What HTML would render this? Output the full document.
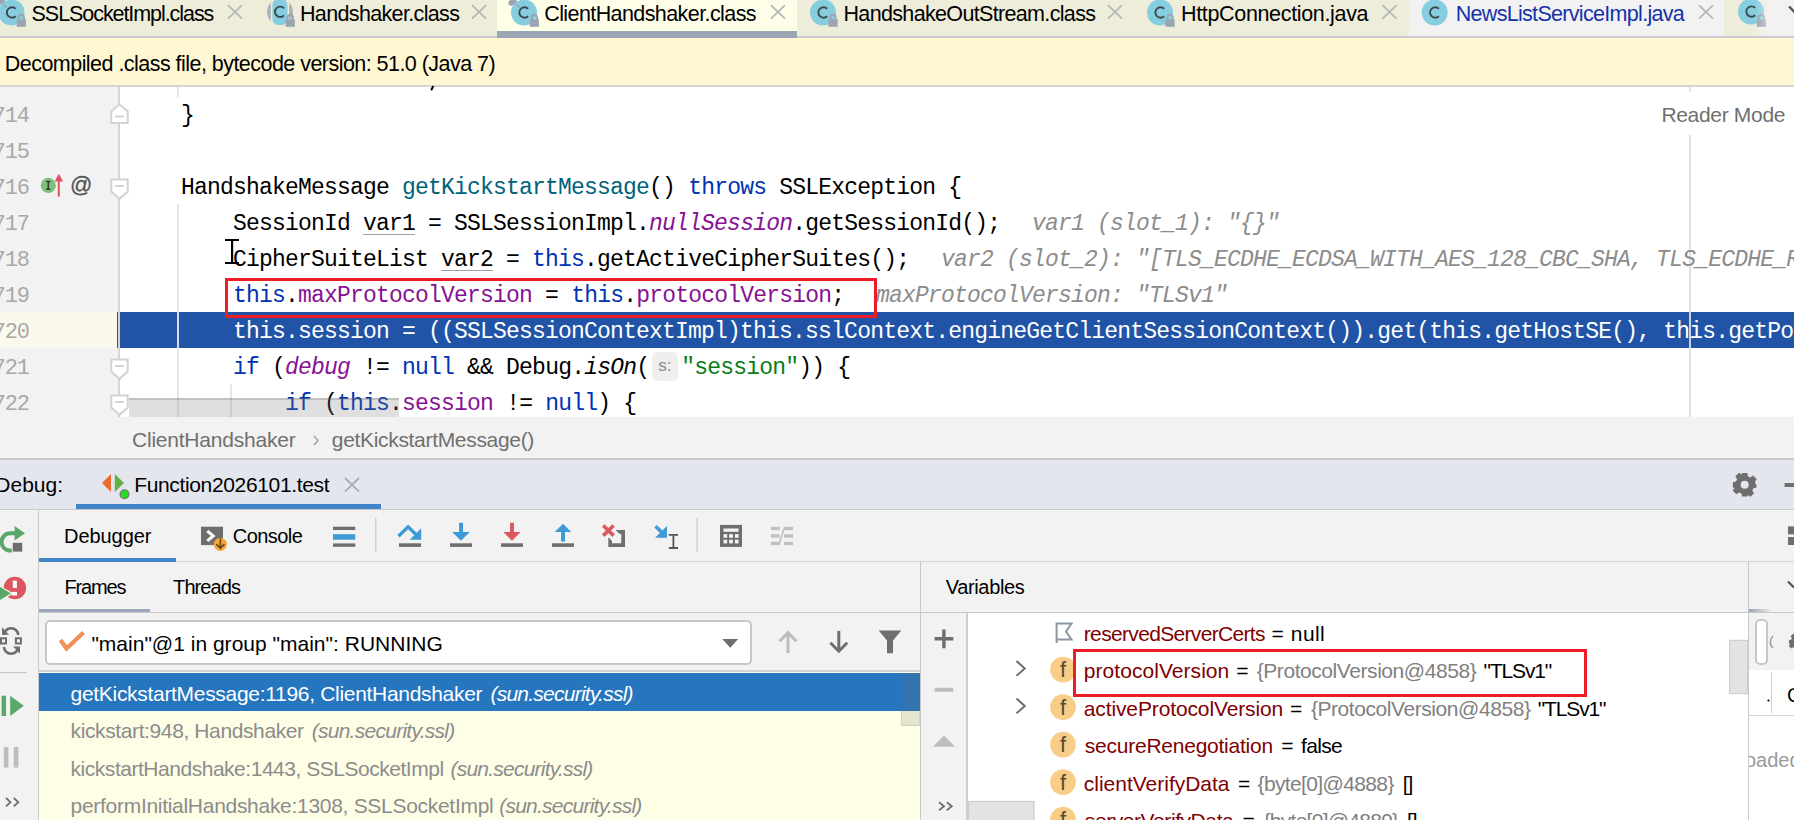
<!DOCTYPE html>
<html><head><meta charset="utf-8">
<style>
*{margin:0;padding:0;box-sizing:border-box}
html,body{width:1794px;height:820px;overflow:hidden;background:#f2f2f2}
body{position:relative;font-family:"Liberation Sans",sans-serif;font-size:20px;color:#000}
.a{position:absolute}
.s{position:absolute;overflow:visible}
.t{position:absolute;white-space:pre;line-height:30px}
.t i{font-style:italic}
.m{position:absolute;white-space:pre;font-family:"Liberation Mono",monospace;font-size:23px;letter-spacing:-0.8px;line-height:30px;color:#000}
.ln{position:absolute;white-space:pre;font-family:"Liberation Mono",monospace;font-size:22px;letter-spacing:-1.2px;line-height:30px;color:#a8a8a8;text-align:right;width:60px}
.kw{color:#0033b3}.fd{color:#871094}.md{color:#00627a}.st{color:#067d17}.it{font-style:italic}
.hint{color:#8c8c8c;font-style:italic}
.ul{text-decoration:underline;text-decoration-color:#a0a0a0;text-underline-offset:4px;text-decoration-thickness:1px}
</style></head>
<body>
<!-- ================= TAB BAR ================= -->
<div class="a" style="left:0;top:0;width:1794px;height:36px;background:#eeedd9"></div>
<div class="a" style="left:0;top:36px;width:1794px;height:2px;background:#cdcdd1"></div>
<div class="a" style="left:497px;top:0;width:300px;height:31px;background:#fefde8"></div>
<div class="a" style="left:497px;top:31px;width:300px;height:7px;background:#9ba7b7"></div>
<div class="a" style="left:1409px;top:0;width:315px;height:36px;background:#f2f2f2"></div>
<div class="a" style="left:1724px;top:0;width:70px;height:36px;background:linear-gradient(90deg,#eeedd9 0px,#eeedd9 30px,#f2f2f2 50px)"></div>

<svg class="s" style="left:0;top:0" width="1794" height="36" viewBox="0 0 1794 36">
 
 <!-- tab1 -->
 <g transform="translate(11.5 12.5)"><circle cx="0" cy="0" r="13" fill="#86cedf"/><path d="M4.2,-3.7 A5.2,5.2 0 1 0 4.2,3.7" fill="none" stroke="#3e474c" stroke-width="1.9"/></g><g transform="translate(21.3 19.3)"><rect x="-4.6" y="0" width="9.2" height="7.5" fill="#9aa5b1"/><path d="M-2.6,0.5 V-2 A2.6,2.6 0 0 1 2.6,-2 V0.5" fill="none" stroke="#9aa5b1" stroke-width="2"/></g>
 <ellipse cx="1" cy="1" rx="4.5" ry="3" transform="rotate(-35 1 1)" fill="#9aa5b1"/>
 <path d="M3.2,4.4 L6.6,7.5" stroke="#9aa5b1" stroke-width="1.6"/>
 <g transform="translate(228 5.2)"><path d="M0,0 L14,13.5 M14,0 L0,13.5" stroke="#b4b8b8" stroke-width="1.8"/></g>
 <!-- tab2 -->
 <circle cx="280" cy="12" r="13" fill="#a9b4bb"/>
 <rect x="270.9" y="-1" width="18.2" height="27" fill="#eeedd9"/>
 <rect x="272.4" y="-1" width="15.1" height="26" rx="6" fill="#86cedf"/>
 <path d="M284,8.3 A5.2,5.2 0 1 0 284,15.3" fill="none" stroke="#3e474c" stroke-width="1.9"/>
 <g transform="translate(290.2 19.3)"><rect x="-4.6" y="0" width="9.2" height="7.5" fill="#9aa5b1"/><path d="M-2.6,0.5 V-2 A2.6,2.6 0 0 1 2.6,-2 V0.5" fill="none" stroke="#9aa5b1" stroke-width="2"/></g>
 <g transform="translate(472 5.2)"><path d="M0,0 L14,13.5 M14,0 L0,13.5" stroke="#b4b8b8" stroke-width="1.8"/></g>
 <!-- tab3 -->
 <g transform="translate(524 12.5)"><circle cx="0" cy="0" r="13" fill="#86cedf"/><path d="M4.2,-3.7 A5.2,5.2 0 1 0 4.2,3.7" fill="none" stroke="#3e474c" stroke-width="1.9"/></g><g transform="translate(534.3 19.3)"><rect x="-4.6" y="0" width="9.2" height="7.5" fill="#9aa5b1"/><path d="M-2.6,0.5 V-2 A2.6,2.6 0 0 1 2.6,-2 V0.5" fill="none" stroke="#9aa5b1" stroke-width="2"/></g>
 <ellipse cx="512.5" cy="2" rx="4.5" ry="3" transform="rotate(-35 512.5 2)" fill="#9aa5b1"/>
 <path d="M516.2,4.4 L519.6,7.5" stroke="#9aa5b1" stroke-width="1.6"/>
 <g transform="translate(771 5.2)"><path d="M0,0 L14,13.5 M14,0 L0,13.5" stroke="#b4b8b8" stroke-width="1.8"/></g>
 <!-- tab4 -->
 <g transform="translate(823 12.5)"><circle cx="0" cy="0" r="13" fill="#86cedf"/><path d="M4.2,-3.7 A5.2,5.2 0 1 0 4.2,3.7" fill="none" stroke="#3e474c" stroke-width="1.9"/></g><g transform="translate(833 19.3)"><rect x="-4.6" y="0" width="9.2" height="7.5" fill="#9aa5b1"/><path d="M-2.6,0.5 V-2 A2.6,2.6 0 0 1 2.6,-2 V0.5" fill="none" stroke="#9aa5b1" stroke-width="2"/></g>
 <g transform="translate(1108 5.2)"><path d="M0,0 L14,13.5 M14,0 L0,13.5" stroke="#b4b8b8" stroke-width="1.8"/></g>
 <!-- tab5 -->
 <g transform="translate(1160 12.5)"><circle cx="0" cy="0" r="13" fill="#86cedf"/><path d="M4.2,-3.7 A5.2,5.2 0 1 0 4.2,3.7" fill="none" stroke="#3e474c" stroke-width="1.9"/></g><g transform="translate(1170 19.3)"><rect x="-4.6" y="0" width="9.2" height="7.5" fill="#9aa5b1"/><path d="M-2.6,0.5 V-2 A2.6,2.6 0 0 1 2.6,-2 V0.5" fill="none" stroke="#9aa5b1" stroke-width="2"/></g>
 <g transform="translate(1382.5 5.2)"><path d="M0,0 L14,13.5 M14,0 L0,13.5" stroke="#b4b8b8" stroke-width="1.8"/></g>
 <!-- tab6 -->
 <g transform="translate(1434.7 12.5)"><circle cx="0" cy="0" r="13" fill="#86cedf"/><path d="M4.2,-3.7 A5.2,5.2 0 1 0 4.2,3.7" fill="none" stroke="#3e474c" stroke-width="1.9"/></g>
 <g transform="translate(1699 5.2)"><path d="M0,0 L14,13.5 M14,0 L0,13.5" stroke="#b4b8b8" stroke-width="1.8"/></g>
 <!-- tab7 -->
 <g transform="translate(1751 11.6)"><circle cx="0" cy="0" r="13" fill="#86cedf"/><path d="M4.2,-3.7 A5.2,5.2 0 1 0 4.2,3.7" fill="none" stroke="#3e474c" stroke-width="1.9"/></g><g transform="translate(1761.3 19.3)"><rect x="-4.6" y="0" width="9.2" height="7.5" fill="#9aa5b1"/><path d="M-2.6,0.5 V-2 A2.6,2.6 0 0 1 2.6,-2 V0.5" fill="none" stroke="#9aa5b1" stroke-width="2"/></g>
 <path d="M1789,6.5 L1795,12.5" stroke="#555" stroke-width="2.4"/>
</svg>
<div class="a" style="left:1755px;top:0;width:20px;height:36px;background:linear-gradient(90deg,rgba(242,242,242,0),rgba(242,242,242,0.7))"></div>

<!-- ================= BANNER ================= -->
<div class="a" style="left:0;top:38px;width:1794px;height:47px;background:#fef7d1"></div>
<div class="a" style="left:0;top:85px;width:1794px;height:2px;background:#d4d4d4"></div>

<!-- ================= EDITOR ================= -->
<div class="a" style="left:0;top:87px;width:118px;height:330px;background:#f2f2f2"></div>
<div class="a" style="left:120px;top:87px;width:1674px;height:330px;background:#fff"></div>
<div class="a" style="left:0;top:312px;width:117px;height:36px;background:#fbf9ec"></div>
<div class="a" style="left:117px;top:312px;width:1677px;height:36px;background:#2154a6"></div>
<div class="a" style="left:118px;top:87px;width:2px;height:330px;background:#d5d5d5"></div>
<!-- indent guides & right margin -->
<div class="a" style="left:177px;top:87px;width:2px;height:10px;background:#e6e6e6"></div>
<div class="a" style="left:177px;top:204px;width:2px;height:213px;background:#e6e6e6"></div>
<div class="a" style="left:177px;top:312px;width:2px;height:36px;background:#d5dcea"></div>
<div class="a" style="left:230px;top:384px;width:2px;height:33px;background:#e6e6e6"></div>
<div class="a" style="left:1689px;top:87px;width:2px;height:330px;background:#e2e2e2"></div>
<div class="a" style="left:1640px;top:91.5px;width:154px;height:43.5px;background:#fff"></div>
<div class="a" style="left:1689px;top:312px;width:2px;height:36px;background:#c9d3e6"></div>
<!-- fold markers -->
<svg class="s" style="left:100px;top:87px" width="40" height="330" viewBox="100 87 40 330">
 <g fill="#fff" stroke="#d3d3d3" stroke-width="2">
  <path d="M111.3,123 V111.5 L119.5,104.3 L127.7,111.5 V123 Z"/>
  <path d="M111.3,179.5 H127.7 V191.5 L119.5,198.8 L111.3,191.5 Z"/>
  <path d="M111.3,359.5 H127.7 V371.5 L119.5,378.8 L111.3,371.5 Z"/>
  <path d="M111.3,395.5 H127.7 V407.5 L119.5,414.8 L111.3,407.5 Z"/>
 </g>
 <g stroke="#d3d3d3" stroke-width="2">
  <path d="M115,116.5 H124 M115,186 H124 M115,366 H124 M115,402 H124"/>
 </g>
</svg>
<!-- gutter icons line 716 -->
<svg class="s" style="left:30px;top:168px" width="70" height="36" viewBox="30 168 70 36">
 <circle cx="48.3" cy="185.4" r="7.6" fill="#7ec07a"/>
 <path d="M46.2,181.6 H50.4 M48.3,181.6 V189.2 M46.2,189.2 H50.4" stroke="#2f3b2e" stroke-width="1.5"/>
 <path d="M58.8,196.6 V179" stroke="#e05566" stroke-width="2"/>
 <path d="M54.6,181.5 L58.8,173.8 L63.2,181.5 Z" fill="#e05566"/>
</svg>
<div class="a" style="left:70px;top:170px;font-family:'Liberation Sans';font-size:22px;line-height:30px;color:#555;-webkit-text-stroke:0.3px #555">@</div>

<div class="ln" style="left:-7.2px;top:102px;width:auto;text-align:left">714</div>
<div class="ln" style="left:-7.2px;top:138px;width:auto;text-align:left">715</div>
<div class="ln" style="left:-7.2px;top:174px;width:auto;text-align:left">716</div>
<div class="ln" style="left:-7.2px;top:210px;width:auto;text-align:left">717</div>
<div class="ln" style="left:-7.2px;top:246px;width:auto;text-align:left">718</div>
<div class="ln" style="left:-7.2px;top:282px;width:auto;text-align:left">719</div>
<div class="ln" style="left:-7.2px;top:318px;width:auto;text-align:left">720</div>
<div class="ln" style="left:-7.2px;top:354px;width:auto;text-align:left">721</div>
<div class="ln" style="left:-7.2px;top:390px;width:auto;text-align:left">722</div>
<div class="m" style="left:129.0px;top:101px;color:#000">    }</div>
<div class="m" style="left:129.0px;top:173px;color:#000">    HandshakeMessage <span class="md">getKickstartMessage</span>() <span class="kw">throws</span> SSLException {</div>
<div class="m" style="left:129.0px;top:209px;color:#000">        SessionId <span class="ul">var1</span> = SSLSessionImpl.<span class="fd it">nullSession</span>.getSessionId();</div>
<div class="m" style="left:129.0px;top:245px;color:#000">        CipherSuiteList <span class="ul">var2</span> = <span class="kw">this</span>.getActiveCipherSuites();</div>
<div class="m" style="left:129.0px;top:281px;color:#000">        <span class="kw">this</span>.<span class="fd">maxProtocolVersion</span> = <span class="kw">this</span>.<span class="fd">protocolVersion</span>;</div>
<div class="m" style="left:129.0px;top:317px;color:#fff">        this.session = ((SSLSessionContextImpl)this.sslContext.engineGetClientSessionContext()).get(this.getHostSE(), this.getPort());</div>
<div class="m" style="left:129.0px;top:353px;color:#000">        <span class="kw">if</span> (<span class="fd it">debug</span> != <span class="kw">null</span> &amp;&amp; Debug.<span class="it">isOn</span>(</div>
<div class="m" style="left:129.0px;top:389px;color:#000">            <span class="kw">if</span> (<span class="kw">this</span>.<span class="fd">session</span> != <span class="kw">null</span>) {</div>
<div class="m" style="left:681.3px;top:353px"><span class="st">"session"</span>)) {</div>
<div class="a" style="left:651.5px;top:352px;width:26.5px;height:29px;background:#efefef;border-radius:5px"></div>
<div class="a" style="left:651.5px;top:351px;width:26.5px;text-align:center;font-family:'Liberation Sans';font-size:17px;line-height:30px;color:#8a8a8a">s:</div>
<div class="m hint" style="left:1032.0px;top:209px">var1 (slot_1): "{}"</div>
<div class="m hint" style="left:941.0px;top:245px">var2 (slot_2): "[TLS_ECDHE_ECDSA_WITH_AES_128_CBC_SHA, TLS_ECDHE_RSA_WITH_AES</div>
<div class="m hint" style="left:876.0px;top:281px">maxProtocolVersion: "TLSv1"</div>
<svg class="s" style="left:425px;top:84px" width="15" height="10" viewBox="425 84 15 10"><path d="M433.3,86 L431.2,90.3" stroke="#000" stroke-width="2"/></svg>

<!-- red annotation box line 719 -->
<div class="a" style="left:225px;top:278px;width:652px;height:40px;border:3px solid #ee1c24"></div>
<!-- I-beam mouse cursor -->
<svg class="s" style="left:220px;top:234px" width="24" height="34" viewBox="220 234 24 34">
 <path d="M225,240 H239 M225,263 H239 M232.1,239 V264" stroke="#000" stroke-width="2.2"/>
</svg>
<!-- editor h-scrollbar -->
<div class="a" style="left:129px;top:398px;width:270px;height:19px;background:rgba(120,120,120,0.24);border-top:2px solid rgba(100,100,100,0.25)"></div>


<!-- ================= BREADCRUMB ================= -->
<div class="a" style="left:0;top:417px;width:1794px;height:41px;background:#f2f2f2"></div>
<svg class="s" style="left:300px;top:425px" width="30" height="30" viewBox="300 425 30 30">
 <path d="M314,436 L318,440.5 L314,445" fill="none" stroke="#a3a3a3" stroke-width="1.5"/>
</svg>
<div class="a" style="left:0;top:458px;width:1794px;height:2px;background:#c9c9c9"></div>

<!-- ================= DEBUG HEADER ================= -->
<div class="a" style="left:0;top:460px;width:1794px;height:49px;background:#e4e6ed"></div>
<div class="a" style="left:76px;top:504px;width:305px;height:5px;background:#4083c9"></div>
<div class="a" style="left:0;top:509px;width:1794px;height:1px;background:#c9c9c9"></div>
<svg class="s" style="left:95px;top:465px" width="40" height="40" viewBox="95 465 40 40">
 <path d="M111,474 V492 L102,483 Z" fill="#ed6a2d"/>
 <path d="M114.8,474 V492 L124,483 Z" fill="#64b04a"/>
 <circle cx="124.5" cy="494.3" r="4.4" fill="#22dd22" stroke="#777" stroke-width="1.2"/>
</svg>
<svg class="s" style="left:340px;top:470px" width="30" height="30" viewBox="340 470 30 30">
 <path d="M345,478 L359,491.6 M359,478 L345,491.6" stroke="#a9aeb2" stroke-width="1.8"/>
</svg>
<svg class="s" style="left:1725px;top:465px" width="69" height="40" viewBox="1725 465 69 40">
 <g transform="translate(1744.7 484.8)" fill="#6e6e6e">
  <path d="M-2.6,-11.8 H2.6 L3.2,-8.6 L5.6,-7.4 L8.4,-9.2 L12,-5.6 L10.2,-2.8 L11.2,-0.4 L11.8,0 V2.6 L8.8,3.4 L7.6,5.6 L9.4,8.4 L5.8,12 L3.1,10.2 L2.6,11.8 H-2.6 L-3.2,8.8 L-5.6,7.6 L-8.4,9.4 L-12,5.8 L-10.2,3.1 L-11.8,2.6 V-2.6 L-8.8,-3.2 L-7.6,-5.6 L-9.4,-8.4 L-5.8,-12 L-3.1,-10.2 Z"/>
 </g>
 <circle cx="1744.7" cy="484.8" r="6.8" fill="#6e6e6e"/>
 <circle cx="1744.7" cy="484.8" r="4" fill="#e4e6ed"/>
 <rect x="1784.6" y="483" width="10" height="4" fill="#6e6e6e"/>
</svg>

<!-- ================= DEBUGGER TOOLBAR ================= -->
<div class="a" style="left:38px;top:510px;width:1px;height:310px;background:#c9c9c9"></div>
<div class="a" style="left:39px;top:561px;width:1755px;height:1px;background:#d5d5d5"></div>
<div class="a" style="left:39px;top:558px;width:137px;height:4px;background:#4083c9"></div>
<svg class="s" style="left:0;top:510px" width="1794" height="52" viewBox="0 510 1794 52">
 <!-- rerun -->
 <path d="M15,533.3 H10.2 A8.6,8.6 0 0 0 10.2,550.6 H11.8" fill="none" stroke="#59a869" stroke-width="4"/>
 <path d="M14.6,526 L25,533.3 L14.6,540.6 Z" fill="#59a869"/>
 <rect x="12.8" y="542.8" width="9.4" height="8.8" fill="#6e6e6e"/>
 <!-- console icon -->
 <rect x="201" y="526.7" width="22" height="18.4" fill="#6e6e6e"/>
 <path d="M207.3,531 L213.2,535.9 L207.3,540.8" fill="none" stroke="#fafafa" stroke-width="3"/>
 <circle cx="220.4" cy="544.3" r="6.6" fill="#f4a93a"/>
 <path d="M220.4,538.3 V548 M216.3,544.2 L220.4,548.3 L224.5,544.2" fill="none" stroke="#6b4a1a" stroke-width="1.7"/>
 <!-- menu -->
 <rect x="333" y="526.7" width="22.3" height="3.3" fill="#6e6e6e"/>
 <rect x="333" y="534.2" width="22.3" height="5.5" fill="#3d9ad6"/>
 <rect x="333" y="543.4" width="22.3" height="3.4" fill="#6e6e6e"/>
 <rect x="375.2" y="518" width="1.2" height="33.5" fill="#c8c8c8"/>
 <!-- step over -->
 <path d="M398.5,536.2 L408.1,526.8 L416,534.5" fill="none" stroke="#3d9ad6" stroke-width="3.4" stroke-linejoin="miter"/>
 <path d="M421.2,528.3 V539.7 H409.8 Z" fill="#3d9ad6"/>
 <rect x="399" y="543.3" width="22" height="3.6" fill="#6e6e6e"/>
 <!-- step into -->
 <rect x="459.1" y="522.8" width="3.9" height="10" fill="#3d9ad6"/>
 <path d="M452.2,532.1 H469.8 L461,540.8 Z" fill="#3d9ad6"/>
 <rect x="450" y="543.3" width="22" height="3.6" fill="#6e6e6e"/>
 <!-- force step into -->
 <rect x="510.05" y="522.8" width="3.9" height="10" fill="#db5860"/>
 <path d="M503.3,532.1 H520.6 L512,540.8 Z" fill="#db5860"/>
 <rect x="501" y="543.3" width="22" height="3.6" fill="#6e6e6e"/>
 <!-- step out -->
 <path d="M554.7,532.1 H571.3 L563,523.8 Z" fill="#3d9ad6"/>
 <rect x="561.1" y="531.5" width="3.9" height="10.1" fill="#3d9ad6"/>
 <rect x="552" y="543.3" width="22" height="3.6" fill="#6e6e6e"/>
 <!-- drop frame -->
 <path d="M615.6,530 H625 V546.9 H608.3 V537.3 L612,541 V543.2 H621.3 V533.7 H619.3 Z" fill="#6e6e6e"/>
 <path d="M603.2,525.5 L613.6,535.6 M613.6,525.5 L603.2,535.6" stroke="#db5860" stroke-width="3.6"/>
 <!-- run to cursor -->
 <path d="M655.5,526.3 L663,533.5" stroke="#3d9ad6" stroke-width="3.6"/>
 <path d="M667,526 V537.8 H655 Z" fill="#3d9ad6"/>
 <path d="M668.8,534.9 H678 M668.8,548 H678" stroke="#555" stroke-width="1.8"/>
 <path d="M673.4,535.5 V547.5" stroke="#555" stroke-width="1.8"/>
 <rect x="696.5" y="518" width="1.2" height="33.5" fill="#c8c8c8"/>
 <!-- calculator -->
 <rect x="720" y="524.9" width="22" height="22" fill="#6e6e6e"/>
 <g fill="#f4f4f4">
  <rect x="723.5" y="528.5" width="15.1" height="3.3"/>
  <rect x="723.5" y="534.1" width="3.7" height="3.7"/><rect x="729.2" y="534.1" width="3.7" height="3.7"/><rect x="734.9" y="534.1" width="3.7" height="3.7"/>
  <rect x="723.5" y="539.7" width="3.7" height="3.7"/><rect x="729.2" y="539.7" width="3.7" height="3.7"/><rect x="734.9" y="539.7" width="3.7" height="3.7"/>
 </g>
 <!-- trace (disabled) -->
 <g fill="#c0c0c0">
  <rect x="771" y="526.8" width="8.7" height="3.3"/><rect x="784" y="526.8" width="9" height="3.3"/>
  <rect x="771" y="534.3" width="8.7" height="3.3"/><rect x="784" y="534.3" width="9" height="3.3"/>
  <rect x="771" y="541.8" width="8.7" height="3.3"/><rect x="784" y="541.8" width="9" height="3.3"/>
 </g>
 <path d="M784.5,527.5 L778.8,545" stroke="#c0c0c0" stroke-width="1.6"/>
 <!-- right edge layout icon -->
 <rect x="1788" y="526.4" width="8" height="8" fill="#6e6e6e"/>
 <rect x="1788" y="537" width="8" height="8" fill="#6e6e6e"/>
</svg>

<!-- ================= FRAMES / THREADS HEADER ================= -->
<div class="a" style="left:39px;top:609px;width:111px;height:3.5px;background:#9aa7ba"></div>
<div class="a" style="left:39px;top:612px;width:1755px;height:1px;background:#c9c9c9"></div>
<div class="a" style="left:920px;top:562px;width:1px;height:258px;background:#c9c9c9"></div>
<div class="a" style="left:1748px;top:562px;width:1px;height:258px;background:#c9c9c9"></div>
<div class="a" style="left:1749px;top:609px;width:22px;height:3px;background:linear-gradient(90deg,#9aa7ba,rgba(154,167,186,0.1))"></div>
<svg class="s" style="left:1770px;top:570px" width="24" height="30" viewBox="1770 570 24 30">
 <path d="M1788,581.5 L1794,587.5" stroke="#555" stroke-width="2.2"/>
</svg>

<!-- ================= LEFT COLUMN ICONS ================= -->
<svg class="s" style="left:0;top:562px" width="38" height="258" viewBox="0 562 38 258">
 <circle cx="14.9" cy="588" r="11.2" fill="#db5860"/>
 <rect x="12.8" y="580.6" width="4.1" height="7.3" fill="#fff"/>
 <rect x="12" y="591.9" width="5" height="3.6" fill="#fff"/>
 <path d="M-2,584.5 L13.8,593.4 L-2,602.5 Z" fill="#f2f2f2"/>
 <path d="M0,586.8 L10.8,593.4 L0,600 Z" fill="#59a869"/>
 <!-- sync -->
 <path d="M4,635 A7,6.6 0 0 1 18.2,635" fill="none" stroke="#6e6e6e" stroke-width="2.6"/>
 <path d="M2,627.3 L2,634.8 L9,634.8 Z" fill="#6e6e6e"/>
 <path d="M4,647 A7,6.6 0 0 0 18.2,647" fill="none" stroke="#6e6e6e" stroke-width="2.6"/>
 <path d="M20,646.4 L20,653.8 L13,646.4 Z" fill="#6e6e6e"/>
 <rect x="1" y="638.3" width="5" height="5.2" fill="none" stroke="#6e6e6e" stroke-width="2"/>
 <rect x="15.9" y="638.3" width="5" height="5.2" fill="none" stroke="#6e6e6e" stroke-width="2"/>
 <rect x="0" y="672" width="27" height="1.2" fill="#c8c8c8"/>
 <!-- resume -->
 <rect x="1.6" y="695.7" width="4.4" height="20.3" fill="#59a869"/>
 <path d="M10.2,695.7 L23.8,705.8 L10.2,716 Z" fill="#59a869"/>
 <!-- pause -->
 <rect x="3.8" y="747" width="4.6" height="20.6" fill="#bdbdbd"/>
 <rect x="13.8" y="747" width="4.6" height="20.6" fill="#bdbdbd"/>
 <path d="M6,798 L10.5,802.2 L6,806.4 M13.8,798 L18.3,802.2 L13.8,806.4" fill="none" stroke="#6e6e6e" stroke-width="1.8"/>
</svg>

<!-- ================= FRAMES PANEL ================= -->
<div class="a" style="left:45px;top:619.5px;width:707px;height:45px;background:#fff;border:2px solid #c7c7c7;border-radius:5px"></div>
<svg class="s" style="left:40px;top:613px" width="880" height="60" viewBox="40 613 880 60">
 <path d="M60.5,640 L66.5,648.5 L83.5,632.5" fill="none" stroke="#f0905a" stroke-width="4.2"/>
 <path d="M722.3,638.9 H738.2 L730.2,647.8 Z" fill="#6e6e6e"/>
 <!-- up disabled -->
 <path d="M788,653 V633.5 M779.6,641.3 L788,632.6 L796.4,641.3" fill="none" stroke="#bcbcbc" stroke-width="3"/>
 <!-- down -->
 <path d="M838.8,631 V651.5 M830.4,642.7 L838.8,651.2 L847.2,642.7" fill="none" stroke="#6e6e6e" stroke-width="3"/>
 <!-- filter -->
 <path d="M878.7,630.6 H901.3 L893,640.5 V653.2 H887 V640.5 Z" fill="#6e6e6e"/>
</svg>
<div class="a" style="left:39px;top:670px;width:881px;height:2px;background:#d3d3d3"></div>
<div class="a" style="left:39px;top:672px;width:881px;height:148px;background:#fefee6"></div>
<div class="a" style="left:39px;top:673px;width:881px;height:38px;background:#2675bf"></div>
<div class="a" style="left:901px;top:673px;width:19px;height:52.5px;background:rgba(110,110,110,0.18);border:1px solid rgba(100,100,100,0.15)"></div>

<!-- ================= VARIABLES TOOLBAR ================= -->
<svg class="s" style="left:921px;top:613px" width="46" height="207" viewBox="921 613 46 207">
 <path d="M934.6,638.8 H953.3 M943.9,629.5 V648.2" stroke="#6e6e6e" stroke-width="3.4"/>
 <path d="M934.6,689.8 H953.3" stroke="#bdbdbd" stroke-width="4"/>
 <path d="M932.9,746.8 L944,735.5 L955.1,746.8 Z" fill="#bdbdbd"/>
 <path d="M939,802.2 L944,806.2 L939,810.2 M946.8,802.2 L951.8,806.2 L946.8,810.2" fill="none" stroke="#6e6e6e" stroke-width="1.8"/>
</svg>
<div class="a" style="left:966px;top:613px;width:2px;height:207px;background:#cdcdcd"></div>

<!-- ================= VARIABLES TREE ================= -->
<div class="a" style="left:968px;top:613px;width:780px;height:207px;background:#fff"></div>
<svg class="s" style="left:968px;top:613px" width="780" height="207" viewBox="968 613 780 207">
 <!-- flag -->
 <path d="M1056.6,643 V623.5 H1071.5 L1066,631.5 L1071.5,639.5 H1056.6" fill="none" stroke="#8a96a0" stroke-width="2"/>
 <!-- arrows -->
 <path d="M1016.5,661 L1024.8,668.4 L1016.5,675.8" fill="none" stroke="#6e6e6e" stroke-width="2"/>
 <path d="M1016.5,698.5 L1024.8,705.9 L1016.5,713.3" fill="none" stroke="#6e6e6e" stroke-width="2"/>
 <!-- f icons -->
 <g>
  <circle cx="1063" cy="669.6" r="12.9" fill="#f7cd88"/>
 </g>
 <circle cx="1063" cy="707.1" r="12.9" fill="#f7cd88"/>
 <circle cx="1063" cy="744.6" r="12.9" fill="#f7cd88"/>
 <circle cx="1063" cy="782.1" r="12.9" fill="#f7cd88"/>
 <circle cx="1063" cy="819.6" r="12.9" fill="#f7cd88"/>
 <!-- horizontal scrollbar -->
 <rect x="968.5" y="801.5" width="65.5" height="20" fill="#e3e3e3" stroke="#cccccc" stroke-width="1.2"/>
 <!-- vertical scrollbar -->
 <rect x="1729.6" y="640.4" width="18" height="53.2" fill="#e3e3e3" stroke="#cfcfcf" stroke-width="1.2"/>
</svg>
<div class="a" style="left:1050px;top:655px;font-family:'Liberation Sans';font-size:22px;line-height:30px;color:#5a4a30;width:26px;text-align:center">f</div>
<div class="a" style="left:1050px;top:692.5px;font-family:'Liberation Sans';font-size:22px;line-height:30px;color:#5a4a30;width:26px;text-align:center">f</div>
<div class="a" style="left:1050px;top:730px;font-family:'Liberation Sans';font-size:22px;line-height:30px;color:#5a4a30;width:26px;text-align:center">f</div>
<div class="a" style="left:1050px;top:767.5px;font-family:'Liberation Sans';font-size:22px;line-height:30px;color:#5a4a30;width:26px;text-align:center">f</div>
<div class="a" style="left:1050px;top:805px;font-family:'Liberation Sans';font-size:22px;line-height:30px;color:#5a4a30;width:26px;text-align:center">f</div>
<!-- red box -->
<div class="a" style="left:1073px;top:649px;width:514px;height:48px;border:3px solid #ee1c24"></div>

<!-- ================= RIGHT PANEL ================= -->
<div class="a" style="left:1749px;top:613px;width:45px;height:57px;background:#f2f2f2"></div>
<div class="a" style="left:1755px;top:619px;width:13px;height:45.5px;border:2px solid #c7c7c7;border-radius:5px;background:#fff"></div>
<div class="a" style="left:1749px;top:670px;width:45px;height:150px;background:#fff"></div>
<div class="a" style="left:1771px;top:672px;width:1px;height:41px;background:#cfcfcf"></div>
<div class="a" style="left:1749px;top:715px;width:45px;height:1px;background:#d5d5d5"></div>
<svg class="s" style="left:1749px;top:613px" width="45" height="120" viewBox="1749 613 45 120">
 <path d="M1773,636 A8,8 0 0 0 1773,648" fill="none" stroke="#a0a0a0" stroke-width="1.6"/>
 <g transform="translate(1797 642) scale(0.68)" fill="#6e6e6e"><path d="M-2.6,-11.8 H2.6 L3.2,-8.6 L5.6,-7.4 L8.4,-9.2 L12,-5.6 L10.2,-2.8 L11.2,-0.4 L11.8,0 V2.6 L8.8,3.4 L7.6,5.6 L9.4,8.4 L5.8,12 L3.1,10.2 L2.6,11.8 H-2.6 L-3.2,8.8 L-5.6,7.6 L-8.4,9.4 L-12,5.8 L-10.2,3.1 L-11.8,2.6 V-2.6 L-8.8,-3.2 L-7.6,-5.6 L-9.4,-8.4 L-5.8,-12 L-3.1,-10.2 Z"/></g>
 <circle cx="1768.5" cy="700.5" r="1.1" fill="#000"/>

</svg>

<div class="t" style="left:1787px;top:680px;font-size:20px;color:#000">C</div>
<div class="t" style="left:31.60px;top:-1px;font-size:21.5px;letter-spacing:-1.067px;color:#000;">SSLSocketImpl.class</div>
<div class="t" style="left:300.00px;top:-1px;font-size:21.5px;letter-spacing:-0.653px;color:#000;">Handshaker.class</div>
<div class="t" style="left:544.20px;top:-1px;font-size:21.5px;letter-spacing:-0.586px;color:#000;">ClientHandshaker.class</div>
<div class="t" style="left:843.50px;top:-1px;font-size:21.5px;letter-spacing:-0.661px;color:#000;">HandshakeOutStream.class</div>
<div class="t" style="left:1181.00px;top:-1px;font-size:21.5px;letter-spacing:-0.339px;color:#000;">HttpConnection.java</div>
<div class="t" style="left:1455.70px;top:-1px;font-size:21.5px;letter-spacing:-0.687px;color:#1432aa;">NewsListServiceImpl.java</div>
<div class="t" style="left:4.80px;top:49px;font-size:21.5px;letter-spacing:-0.537px;color:#000;">Decompiled .class file, bytecode version: 51.0 (Java 7)</div>
<div class="t" style="left:1661.40px;top:100px;font-size:21px;letter-spacing:-0.320px;color:#6f6f6f;">Reader Mode</div>
<div class="t" style="left:132.00px;top:425px;font-size:21px;letter-spacing:-0.220px;color:#707070;">ClientHandshaker</div>
<div class="t" style="left:331.80px;top:425px;font-size:21px;letter-spacing:-0.320px;color:#707070;">getKickstartMessage()</div>
<div class="t" style="left:-4.70px;top:470px;font-size:21px;letter-spacing:0.000px;color:#000;">Debug:</div>
<div class="t" style="left:134.20px;top:470px;font-size:21px;letter-spacing:-0.347px;color:#000;">Function2026101.test</div>
<div class="t" style="left:64.00px;top:521px;font-size:20px;letter-spacing:-0.057px;color:#000;">Debugger</div>
<div class="t" style="left:232.80px;top:521px;font-size:20px;letter-spacing:-0.567px;color:#000;">Console</div>
<div class="t" style="left:64.50px;top:572px;font-size:20px;letter-spacing:-1.160px;color:#000;">Frames</div>
<div class="t" style="left:173.10px;top:572px;font-size:20px;letter-spacing:-0.917px;color:#000;">Threads</div>
<div class="t" style="left:945.70px;top:572px;font-size:20px;letter-spacing:-0.350px;color:#000;">Variables</div>
<div class="t" style="left:91.40px;top:629px;font-size:21px;letter-spacing:0.009px;color:#000;">"main"@1 in group "main": RUNNING</div>
<div class="t" style="left:70.60px;top:679px;font-size:21px;letter-spacing:-0.307px;color:#fff;">getKickstartMessage:1196, ClientHandshaker</div>
<div class="t" style="left:490.40px;top:679px;font-size:21px;letter-spacing:-0.753px;color:#fff;"><i>(sun.security.ssl)</i></div>
<div class="t" style="left:70.60px;top:716px;font-size:21px;letter-spacing:-0.387px;color:#8c8c8c;">kickstart:948, Handshaker</div>
<div class="t" style="left:311.70px;top:716px;font-size:21px;letter-spacing:-0.729px;color:#8c8c8c;"><i>(sun.security.ssl)</i></div>
<div class="t" style="left:70.60px;top:754px;font-size:21px;letter-spacing:-0.473px;color:#8c8c8c;">kickstartHandshake:1443, SSLSocketImpl</div>
<div class="t" style="left:450.50px;top:754px;font-size:21px;letter-spacing:-0.771px;color:#8c8c8c;"><i>(sun.security.ssl)</i></div>
<div class="t" style="left:70.60px;top:791px;font-size:21px;letter-spacing:-0.293px;color:#8c8c8c;">performInitialHandshake:1308, SSLSocketImpl</div>
<div class="t" style="left:499.20px;top:791px;font-size:21px;letter-spacing:-0.753px;color:#8c8c8c;"><i>(sun.security.ssl)</i></div>
<div class="t" style="left:1083.80px;top:619px;font-size:21px;letter-spacing:-0.667px;color:#800000;">reservedServerCerts</div>
<div class="t" style="left:1271.50px;top:619px;font-size:21px;letter-spacing:0.000px;color:#000;">=</div>
<div class="t" style="left:1290.80px;top:619px;font-size:21px;letter-spacing:0.433px;color:#000;">null</div>
<div class="t" style="left:1083.80px;top:656px;font-size:21px;letter-spacing:0.050px;color:#800000;">protocolVersion</div>
<div class="t" style="left:1236.30px;top:656px;font-size:21px;letter-spacing:0.000px;color:#000;">=</div>
<div class="t" style="left:1256.70px;top:656px;font-size:21px;letter-spacing:-0.433px;color:#808080;">{ProtocolVersion@4858}</div>
<div class="t" style="left:1483.60px;top:656px;font-size:21px;letter-spacing:-1.150px;color:#000;">"TLSv1"</div>
<div class="t" style="left:1083.80px;top:694px;font-size:21px;letter-spacing:-0.125px;color:#800000;">activeProtocolVersion</div>
<div class="t" style="left:1290.10px;top:694px;font-size:21px;letter-spacing:0.000px;color:#000;">=</div>
<div class="t" style="left:1310.90px;top:694px;font-size:21px;letter-spacing:-0.433px;color:#808080;">{ProtocolVersion@4858}</div>
<div class="t" style="left:1537.80px;top:694px;font-size:21px;letter-spacing:-1.150px;color:#000;">"TLSv1"</div>
<div class="t" style="left:1084.80px;top:731px;font-size:21px;letter-spacing:-0.239px;color:#800000;">secureRenegotiation</div>
<div class="t" style="left:1281.30px;top:731px;font-size:21px;letter-spacing:0.000px;color:#000;">=</div>
<div class="t" style="left:1301.00px;top:731px;font-size:21px;letter-spacing:-0.675px;color:#000;">false</div>
<div class="t" style="left:1083.80px;top:769px;font-size:21px;letter-spacing:-0.013px;color:#800000;">clientVerifyData</div>
<div class="t" style="left:1238.00px;top:769px;font-size:21px;letter-spacing:0.000px;color:#000;">=</div>
<div class="t" style="left:1257.50px;top:769px;font-size:21px;letter-spacing:-0.631px;color:#808080;">{byte[0]@4888}</div>
<div class="t" style="left:1402.80px;top:769px;font-size:21px;letter-spacing:-1.200px;color:#000;">[]</div>
<div class="t" style="left:1084.80px;top:806px;font-size:21px;letter-spacing:-0.420px;color:#800000;">serverVerifyData</div>
<div class="t" style="left:1242.60px;top:806px;font-size:21px;letter-spacing:0.000px;color:#000;">=</div>
<div class="t" style="left:1263.60px;top:806px;font-size:21px;letter-spacing:-0.738px;color:#808080;">{byte[0]@4889}</div>
<div class="t" style="left:1407.00px;top:806px;font-size:21px;letter-spacing:-1.000px;color:#000;">[]</div>
<div class="a" style="left:1749px;top:740px;width:45px;height:40px;overflow:hidden"><div class="t" style="left:-4px;top:5px;color:#9a9a9a">oaded</div></div>
</body></html>
